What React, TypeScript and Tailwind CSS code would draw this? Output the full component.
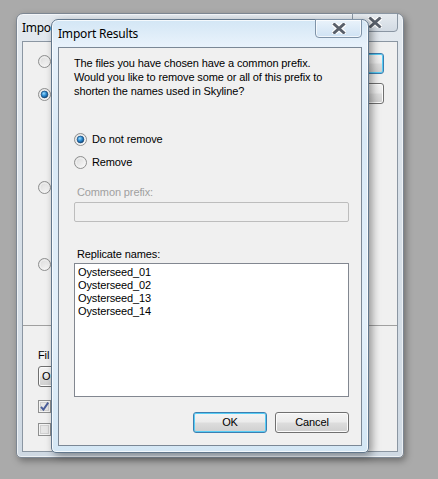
import { ReactNode } from "react";

const UI = "font-['Liberation_Sans',Arial,sans-serif] text-[11px] tracking-[-0.12px] text-black";

function Radio({ checked = false }: { checked?: boolean }) {
  return (
    <svg width="13" height="13" viewBox="0 0 13 13" className="shrink-0">
      <defs>
        <linearGradient id="rg" x1="0" y1="0" x2="1" y2="1">
          <stop offset="0" stopColor="#d6d6d6" />
          <stop offset="1" stopColor="#fdfdfd" />
        </linearGradient>
        <radialGradient id="dot" cx="0.4" cy="0.35" r="0.7">
          <stop offset="0" stopColor="#9fdcfb" />
          <stop offset="0.5" stopColor="#2a8bd3" />
          <stop offset="1" stopColor="#0d3f70" />
        </radialGradient>
      </defs>
      <circle cx="6.5" cy="6.5" r="6" fill="url(#rg)" stroke="#8e8f8f" />
      <circle cx="6.5" cy="6.5" r="4.5" fill="none" stroke="#f4f4f4" strokeWidth="0.8" />
      {checked && <circle cx="6.5" cy="6.5" r="3.4" fill="url(#dot)" stroke="#1c4b78" strokeWidth="0.7" />}
    </svg>
  );
}

function Check({ checked = false }: { checked?: boolean }) {
  return (
    <svg width="13" height="13" viewBox="0 0 13 13" className="shrink-0">
      <rect x="0.5" y="0.5" width="12" height="12" fill="#f4f4f4" stroke="#8e8f8f" />
      <rect x="2.5" y="2.5" width="8" height="8" fill="#e6e6e6" stroke="#d0d0d0" />
      {checked && (
        <path d="M3 6.8 L5.4 9.6 L10.2 2.6" fill="none" stroke="#4a5e9a" strokeWidth="1.9" />
      )}
    </svg>
  );
}

function CloseX() {
  return (
    <svg width="14" height="11" viewBox="0 0 14 11">
      <path d="M2.5 1.5 L11.5 9.5 M11.5 1.5 L2.5 9.5" stroke="#ffffff" strokeWidth="5.2" strokeLinecap="square" />
      <path d="M2.5 1.5 L11.5 9.5 M11.5 1.5 L2.5 9.5" stroke="#59606b" strokeWidth="3" strokeLinecap="square" />
    </svg>
  );
}

function Button({ children, focused = false, className = "" }: { children?: ReactNode; focused?: boolean; className?: string }) {
  return (
    <div
      className={`h-[21px] rounded-[3px] border flex items-center justify-center bg-[linear-gradient(to_bottom,#f4f4f4_0%,#ebebeb_48%,#dddddd_52%,#cfcfcf_100%)] ${
        focused
          ? "border-[#3c7fb1] shadow-[inset_0_0_0_1px_#58cdf5]"
          : "border-[#707070] shadow-[inset_0_0_0_1px_#fbfbfb]"
      } ${className}`}
    >
      {children}
    </div>
  );
}

function BackWindow() {
  return (
    <div className="absolute left-[16px] top-[13px] w-[388px] h-[445px] flex flex-col rounded-t-[7px] rounded-b-[5px] border border-[#7d8793] bg-[linear-gradient(to_bottom,#e3e9ef,#d9e1e9_40%,#cfd9e3)] shadow-[2px_3px_7px_rgba(0,0,0,0.35),inset_0_0_0_1px_rgba(255,255,255,0.6)]">
      {/* title bar, mostly hidden behind the dialog */}
      <div className="h-[27px] flex items-start justify-between">
        <span className="ml-[5px] mt-[5px] whitespace-nowrap font-['Noto_Sans',sans-serif] text-[12px] tracking-[-0.3px] text-black">Impo</span>
        <div className="-mt-px mr-[5px] w-[46px] h-[19px] rounded-b-[4px] border border-[#8a96a3] bg-[linear-gradient(to_bottom,#e6ebf0,#d2dae3)] flex items-center justify-center">
          <CloseX />
        </div>
      </div>
      {/* client */}
      <div className={`flex-1 mx-[5px] mb-[5px] border border-[#8b96a2] bg-[#f0f0f0] flex flex-col ${UI}`}>
        <div className="h-[283px] flex justify-between">
          <div className="pl-[15px] flex flex-col">
            <div className="mt-[13px]"><Radio /></div>
            <div className="mt-[20px]"><Radio checked /></div>
            <div className="mt-[80px]"><Radio /></div>
            <div className="mt-[64px]"><Radio /></div>
          </div>
          <div className="pr-[13px] pt-[11px] flex flex-col gap-[9px]">
            <Button focused className="w-[75px]" />
            <Button className="w-[75px]" />
          </div>
        </div>
        <div className="border-t border-[#a0a0a0] pl-[15px] flex flex-col">
          <div className="mt-[22px] whitespace-nowrap leading-[14px]">Fil</div>
          <Button className="mt-[4px] w-[120px] !justify-start pl-[3px]">O</Button>
          <div className="mt-[13px]"><Check checked /></div>
          <div className="mt-[10px]"><Check /></div>
        </div>
      </div>
    </div>
  );
}

function ImportResults() {
  const names = ["Oysterseed_01", "Oysterseed_02", "Oysterseed_13", "Oysterseed_14"];
  return (
    <div className="absolute left-[51px] top-[19px] w-[318px] h-[434px] flex flex-col rounded-t-[7px] rounded-b-[5px] border border-[#62778c] bg-[linear-gradient(to_bottom,#d3e6f5,#e8f2fb_25px,#d9e9f6_120px,#e4f0fa_300px,#d4e7f5)] shadow-[3px_3px_8px_rgba(0,0,0,0.4),inset_0_0_0_1px_rgba(255,255,255,0.75)]">
      {/* title bar */}
      <div className="h-[27px] flex items-start justify-between">
        <span className="pl-[6px] pt-[5px] font-['Noto_Sans',sans-serif] text-[12px] tracking-[-0.2px] text-black">Import Results</span>
        <div className="-mt-px mr-[6px] w-[47px] h-[19px] rounded-b-[4px] border border-[#7f93a8] bg-[linear-gradient(to_bottom,#eaf3fb,#cfe2f3)] shadow-[inset_0_0_0_1px_rgba(255,255,255,0.7)] flex items-center justify-center">
          <CloseX />
        </div>
      </div>
      {/* client */}
      <div className={`flex-1 mx-[6px] mb-[6px] border border-[#7b8896] bg-[#f0f0f0] flex flex-col ${UI}`}>
        <p className="pl-[15px] pt-[8px] leading-[14px]">
          The files you have chosen have a common prefix.
          <br />
          Would you like to remove some or all of this prefix to
          <br />
          shorten the names used in Skyline?
        </p>
        <label className="mt-[35px] ml-[15px] h-[13px] flex items-center gap-[5px]">
          <Radio checked />
          <span>Do not remove</span>
        </label>
        <label className="mt-[10px] ml-[15px] h-[13px] flex items-center gap-[5px]">
          <Radio />
          <span>Remove</span>
        </label>
        <div className="mt-[16px] ml-[18px] leading-[14px] text-[#a0a0a0]">Common prefix:</div>
        <div className="mt-[3px] ml-[15px] w-[275px] h-[20px] rounded-[2px] border border-[#bdbdbd] bg-[#f0f0f0]" />
        <div className="mt-[25px] ml-[18px] leading-[14px]">Replicate names:</div>
        <div className="mt-[2px] ml-[15px] w-[275px] h-[134px] border border-[#828790] bg-white pl-[3px] pt-[2px] leading-[13px]">
          {names.map((n) => (
            <div key={n}>{n}</div>
          ))}
        </div>
        <div className="mt-[15px] pr-[12px] flex justify-end gap-[8px]">
          <Button focused className="w-[74px]">OK</Button>
          <Button className="w-[74px]">Cancel</Button>
        </div>
      </div>
    </div>
  );
}

export default function App() {
  return (
    <div className="relative w-[438px] h-[479px] overflow-hidden bg-[#aaaaaa]">
      <BackWindow />
      <ImportResults />
    </div>
  );
}
